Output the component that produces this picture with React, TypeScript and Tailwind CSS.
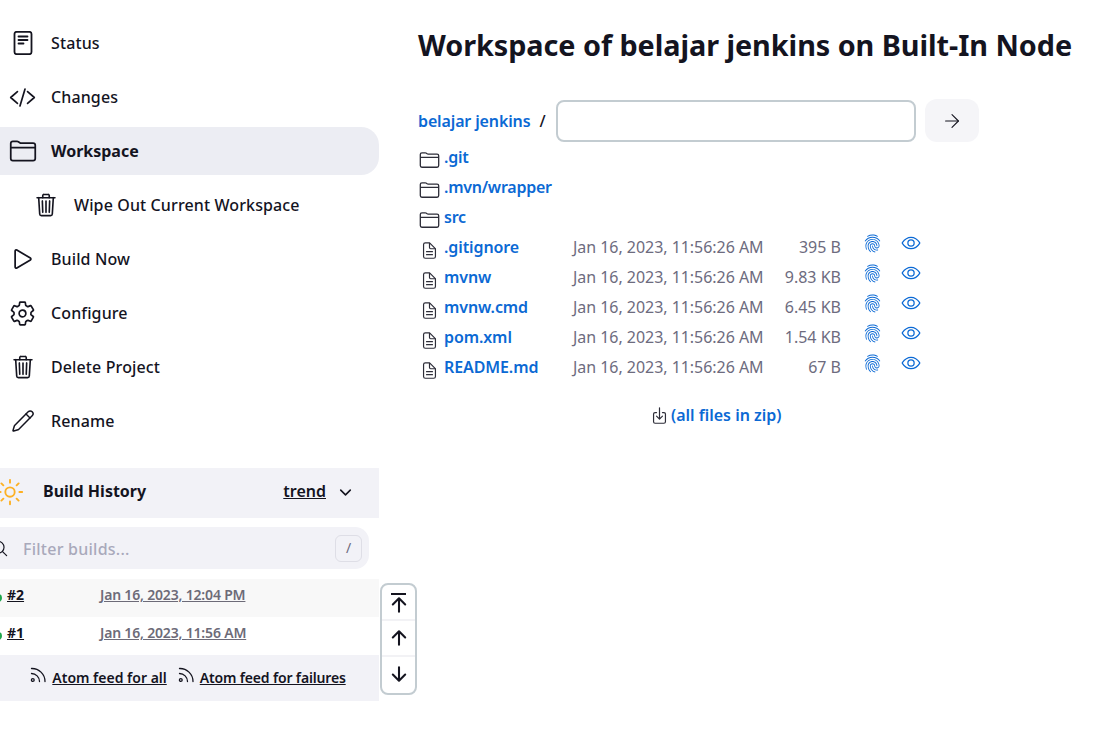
import type { ReactNode } from "react";
import { ArrowRight, Pencil } from "lucide-react";
import {
  IoArrowDownOutline,
  IoArrowUpOutline,
  IoChevronDownOutline,
  IoCodeSlashOutline,
  IoDocumentTextOutline,
  IoDownloadOutline,
  IoEyeOutline,
  IoFingerPrintOutline,
  IoFolderOutline,
  IoPlayOutline,
  IoSearchOutline,
  IoSettingsOutline,
  IoSunnyOutline,
  IoTrashOutline,
} from "react-icons/io5";

const StatusIcon = () => (
  <svg width="24" height="24" viewBox="0 0 24 24" fill="none" stroke="currentColor" strokeLinecap="round" strokeWidth="1.8">
    <rect x="3.5" y="0.8" width="17" height="22.4" rx="2.2" />
    <path d="M7.5 5.5h9M7.5 9h9M7.5 12.5h5" />
  </svg>
);

const RssIcon = () => (
  <svg width="17" height="17" viewBox="0 0 17 17" fill="none" stroke="currentColor" strokeLinecap="round" strokeWidth="1.3" className="mb-[7px]">
    <circle cx="2.8" cy="14" r="1.4" />
    <path d="M1.5 7.5a8 8 0 0 1 8 8M1.5 2.5a13 13 0 0 1 13.5 13" />
  </svg>
);

type Task = { label: string; icon: ReactNode; active?: boolean; nested?: boolean };

const tasks: Task[] = [
  { label: "Status", icon: <StatusIcon /> },
  { label: "Changes", icon: <IoCodeSlashOutline size={27} /> },
  { label: "Workspace", icon: <IoFolderOutline size={28} />, active: true },
  { label: "Wipe Out Current Workspace", icon: <IoTrashOutline size={26} />, nested: true },
  { label: "Build Now", icon: <IoPlayOutline size={28} /> },
  { label: "Configure", icon: <IoSettingsOutline size={27} /> },
  { label: "Delete Project", icon: <IoTrashOutline size={26} /> },
  { label: "Rename", icon: <Pencil size={24} strokeWidth={1.5} /> },
];

const folders = [".git", ".mvn/wrapper", "src"];

const files = [
  { name: ".gitignore", size: "395 B" },
  { name: "mvnw", size: "9.83 KB" },
  { name: "mvnw.cmd", size: "6.45 KB" },
  { name: "pom.xml", size: "1.54 KB" },
  { name: "README.md", size: "67 B" },
];

const builds = [
  { id: "#2", date: "Jan 16, 2023, 12:04 PM", striped: true },
  { id: "#1", date: "Jan 16, 2023, 11:56 AM", striped: false },
];

const Sidebar = () => (
  <aside className="w-[379px] shrink-0 pt-[19px]">
    <div className="flex flex-col gap-[6px]">
      {tasks.map((task) => (
        <div
          key={task.label}
          className={`flex h-12 items-center rounded-r-[18px] ${task.active ? "bg-[#ecedf3] font-bold" : "font-medium tracking-[0.12px]"} ${task.nested ? "pl-[31px]" : "pl-2"}`}
        >
          <span className="flex w-[29px] justify-center">{task.icon}</span>
          <span className="ml-[14px]">{task.label}</span>
        </div>
      ))}
    </div>

    <div className="mt-[23px] flex h-[50px] items-center bg-[#f2f2f7] pr-[25px] pb-[2px]">
      <IoSunnyOutline size={30} className="ml-[-5px] text-[#fdb023]" />
      <span className="mb-[2px] ml-[18px] font-bold">Build History</span>
      <span className="mb-[2px] ml-auto font-semibold underline">trend</span>
      <IoChevronDownOutline size={17} className="ml-[11px]" />
    </div>

    <div className="mt-[9px] mr-[10px] flex h-[42px] items-center rounded-r-[14px] bg-[#f2f2f7] pr-[7px]">
      <IoSearchOutline size={19} className="ml-[-10px]" />
      <span className="mt-[2px] ml-[14px] font-medium tracking-[0.25px] text-[#a9a9bb]">Filter builds...</span>
      <span className="ml-auto flex h-[27px] w-[27px] items-center justify-center rounded-[6px] border border-[#dedee6] text-sm text-[#6d6b7e]">/</span>
    </div>

    <div className="mt-[10px]">
      {builds.map((build) => (
        <div key={build.id} className={`flex h-[38px] items-center text-sm ${build.striped ? "bg-[#f8f8f8]" : "bg-white"}`}>
          <span className="ml-[-6px] h-[8px] w-[8px] rounded-full bg-[#1ea64b]" />
          <span className="mb-[6px] ml-[5px] w-[93px] font-bold underline">{build.id}</span>
          <span className="mb-[6px] font-semibold tracking-[-0.18px] text-[#6d6b78] underline">{build.date}</span>
        </div>
      ))}
    </div>

    <div className="flex h-[46px] items-center justify-center gap-[11px] bg-[#f2f2f7] pr-[3px] text-sm font-semibold">
      <span className="flex items-center gap-[5px]"><RssIcon /><span className="underline">Atom feed for all</span></span>
      <span className="flex items-center gap-[5px] tracking-[-0.16px]"><RssIcon /><span className="underline">Atom feed for failures</span></span>
    </div>
  </aside>
);

const Workspace = () => (
  <main className="ml-[39px] flex-1 pt-[22px]">
    <h1 className="text-[28.8px] leading-[45px] font-bold tracking-[-0.05px] whitespace-nowrap">Workspace of belajar jenkins on Built-In Node</h1>

    <div className="mt-[32px] flex items-center">
      <a className="font-semibold tracking-[-0.13px] text-[#0b69d4]">belajar jenkins</a>
      <span className="ml-[9px] font-medium">/</span>
      <div className="ml-[10px] h-[42px] w-[360px] rounded-[8px] border-2 border-[#c3ccd1]" />
      <div className="ml-[9px] flex h-[43px] w-[54px] items-center justify-center rounded-[12px] bg-[#f5f5f8]">
        <ArrowRight size={22} strokeWidth={1.2} />
      </div>
    </div>

    <div className="flex flex-col">
      {folders.map((name) => (
        <div key={name} className="flex h-[30px] items-center">
          <IoFolderOutline size={22} className="mt-[6px] ml-[1px] w-[21px] text-[#2d2d38]" />
          <a className="ml-[4px] font-semibold tracking-[-0.25px] text-[#0b69d4]">{name}</a>
        </div>
      ))}
      {files.map((file) => (
        <div key={file.name} className="flex h-[30px] items-center">
          <IoDocumentTextOutline size={19} className="mt-[7px] ml-[2px] w-[19px] text-[#2d2d38]" />
          <a className="ml-[5px] w-[129px] font-semibold tracking-[-0.1px] text-[#0b69d4]">{file.name}</a>
          <span className="w-[190px] tracking-[-0.04px] whitespace-nowrap text-[#6d6b7e]">Jan 16, 2023, 11:56:26 AM</span>
          <span className="w-[78px] text-right text-[#6d6b7e]">{file.size}</span>
          <IoFingerPrintOutline size={19} className="mt-[-7px] ml-[22px] text-[#0b69d4]" />
          <IoEyeOutline size={20} className="mt-[-9px] ml-[19px] text-[#0b69d4]" />
        </div>
      ))}
    </div>

    <div className="mt-[21px] ml-[232px] flex items-center">
      <IoDownloadOutline size={19} className="text-[#2d2d38]" />
      <a className="ml-[2px] font-semibold text-[#0b69d4]">(all files in zip)</a>
    </div>
  </main>
);

const ScrollButtons = () => (
  <div className="absolute top-[583px] left-[380px] flex h-[112px] w-[37px] flex-col rounded-[8px] border-2 border-[#c3ccd1] bg-white">
    <div className="relative flex flex-1 items-center justify-center border-b-2 border-[#f2f2f5]">
      <span className="absolute top-[8px] h-[2px] w-[15px] bg-[#14141f]" />
      <IoArrowUpOutline size={22} className="mt-[6px]" />
    </div>
    <div className="flex flex-1 items-center justify-center border-b-2 border-[#f2f2f5]">
      <IoArrowUpOutline size={22} />
    </div>
    <div className="flex flex-1 items-center justify-center pb-[2px]">
      <IoArrowDownOutline size={22} />
    </div>
  </div>
);

export default function App() {
  return (
    <div className="relative flex h-[736px] overflow-hidden bg-white font-['Noto_Sans',sans-serif] text-[#14141f]">
      <Sidebar />
      <Workspace />
      <ScrollButtons />
    </div>
  );
}
